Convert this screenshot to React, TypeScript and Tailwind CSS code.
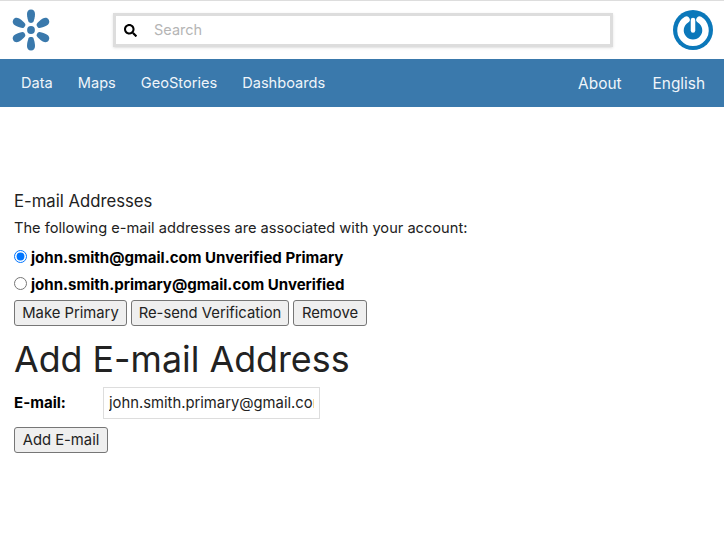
import { FaSearch } from 'react-icons/fa';

const font = { fontFamily: 'Inter, sans-serif' };

const petal =
  'M0 -20 C2.6 -20 3.9 -18 3.9 -15.5 C3.9 -12.5 3 -9.5 2.4 -8 C1.8 -6.6 -1.8 -6.6 -2.4 -8 C-3 -9.5 -3.9 -12.5 -3.9 -15.5 C-3.9 -18 -2.6 -20 0 -20Z';

function Logo() {
  return (
    <svg width="40" height="42" viewBox="-19.5 -20.5 39 41" fill="#3a79ac">
      <circle r="3.8" />
      {[0, 60, 120, 180, 240, 300].map((a) => (
        <path key={a} d={petal} transform={`rotate(${a})`} />
      ))}
    </svg>
  );
}

function PowerIcon() {
  return (
    <svg width="40" height="40" viewBox="0 0 40 40">
      <circle cx="20" cy="20" r="20" fill="#0b78ba" />
      <path d="M13.5 9.6 A12.5 12.5 0 1 0 26.5 9.6" fill="none" stroke="#fff" strokeWidth="6.5" strokeLinecap="round" />
      <path d="M20 10 V20.5" fill="none" stroke="#fff" strokeWidth="4.5" strokeLinecap="round" />
    </svg>
  );
}

function Btn({ children, className }: { children: string; className: string }) {
  return (
    <button className={`h-[26px] border border-[#767676] rounded-[3px] bg-[#efefef] text-[14.8px] text-[#222] leading-none whitespace-nowrap ${className}`}>
      {children}
    </button>
  );
}

export default function App() {
  return (
    <div className="w-[724px] h-[557px] bg-white overflow-hidden text-black" style={font}>
      <header className="h-[59px] border-t border-[#ddd] flex items-center justify-between pl-[11px] pr-[11px]">
        <Logo />
        <div className="w-[500px] h-[34px] ml-[2px] border-[3px] border-[#ddd] shadow-sm flex items-center pl-[8px]">
          <FaSearch size={13} className="text-black" />
          <span className="ml-[17px] text-[14.5px] text-[#b5b5b5]">Search</span>
        </div>
        <PowerIcon />
      </header>

      <nav className="h-[48px] pt-[2px] bg-[#3a79ac] flex items-center justify-between pl-[21px] pr-[19px] text-[#f0f5fa]">
        <div className="flex gap-[25px] text-[14.6px]">
          <span>Data</span>
          <span>Maps</span>
          <span>GeoStories</span>
          <span>Dashboards</span>
        </div>
        <div className="flex gap-[31px] text-[15.4px]">
          <span>About</span>
          <span>English</span>
        </div>
      </nav>

      <main className="px-[14px] pt-[83px]">
        <h2 className="text-[16.7px] leading-[22px] text-[#222]">E-mail Addresses</h2>
        <p className="mt-[6px] text-[14.63px] leading-[20px] text-[#222]">
          The following e-mail addresses are associated with your account:
        </p>
        <label className="mt-[10px] h-[20px] flex items-center gap-[4px] text-[15.05px] font-bold">
          <input type="radio" name="email" defaultChecked className="w-[13px] h-[13px] mb-[3px] appearance-auto" />
          john.smith@gmail.com Unverified Primary
        </label>
        <label className="mt-[7px] h-[20px] flex items-center gap-[4px] text-[15.05px] font-bold">
          <input type="radio" name="email" className="w-[13px] h-[13px] mb-[3px] appearance-auto" />
          john.smith.primary@gmail.com Unverified
        </label>
        <div className="mt-[5px] flex gap-[4px]">
          <Btn className="w-[113px]">Make Primary</Btn>
          <Btn className="w-[158px]">Re-send Verification</Btn>
          <Btn className="w-[74px]">Remove</Btn>
        </div>
        <h1 className="mt-[13px] text-[35.8px] leading-[40px] text-[#222]">Add E-mail Address</h1>
        <div className="mt-[8px] flex items-center">
          <label className="w-[89px] text-[15.05px] font-bold">E-mail:</label>
          <input
            readOnly
            value="john.smith.primary@gmail.com"
            className="w-[217px] h-[32px] border border-[#ddd] px-[5px] text-[14.8px] text-[#222] outline-none"
          />
        </div>
        <div className="mt-[8px]">
          <Btn className="w-[94px]">Add E-mail</Btn>
        </div>
      </main>
    </div>
  );
}
